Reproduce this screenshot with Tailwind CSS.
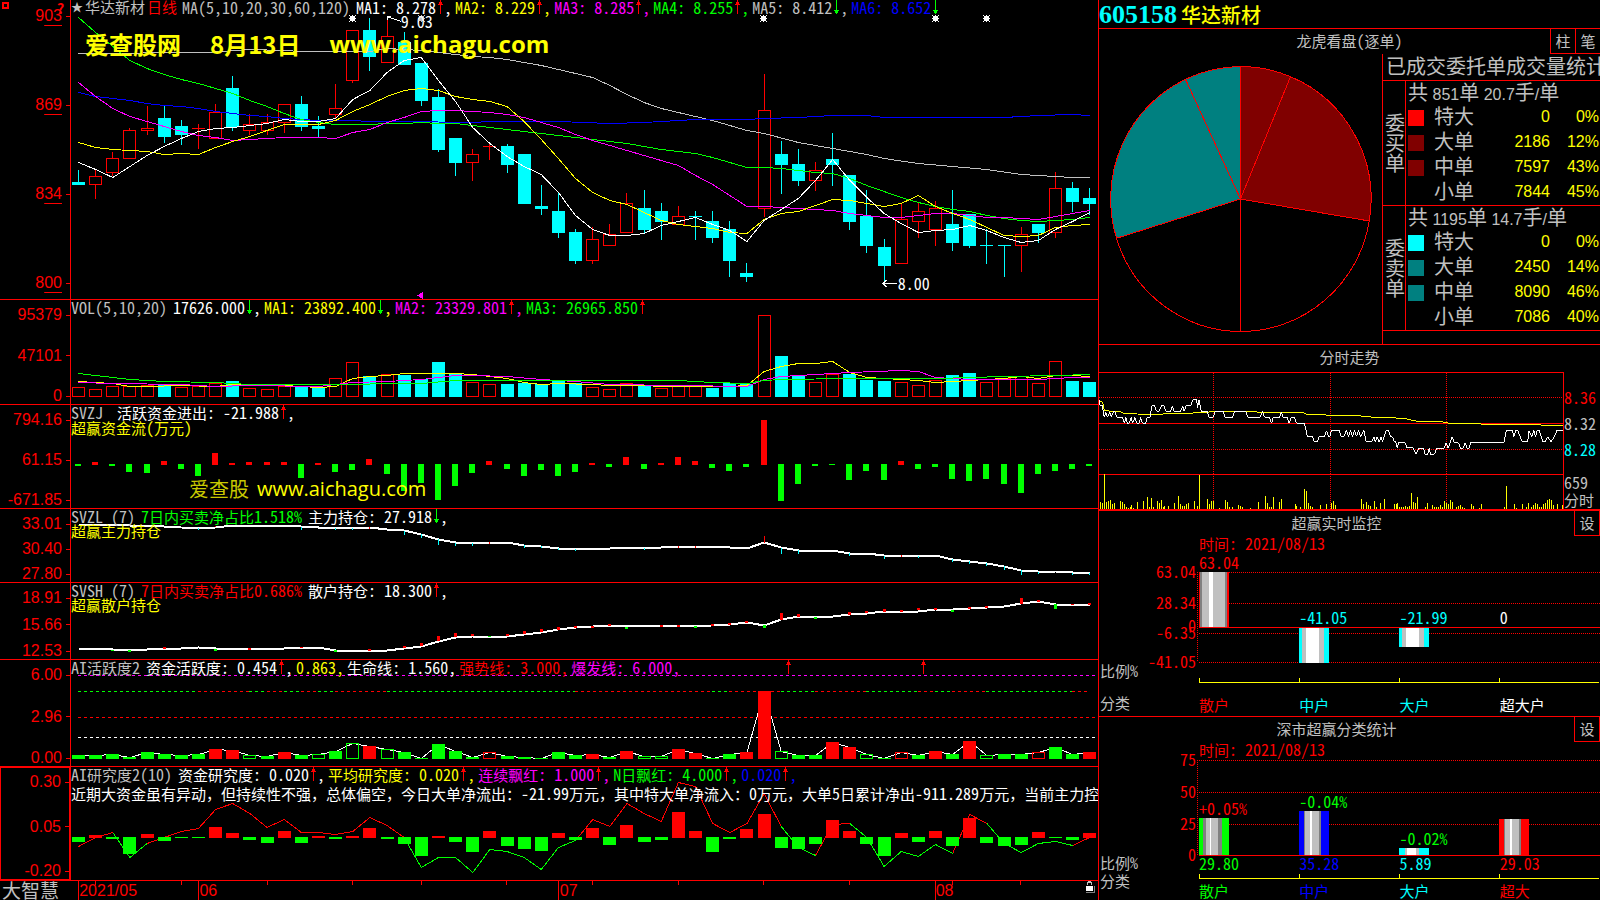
<!DOCTYPE html>
<html lang="zh-CN">
<head>
  <meta charset="UTF-8" />
  <meta name="viewport" content="width=device-width, initial-scale=1" />
  <title>605158 华达新材</title>
  <script src="https://cdn.jsdelivr.net/npm/@tailwindcss/browser@4"></script>
</head>
<body class="h-screen overflow-hidden bg-black text-[#c0c0c0] text-[15px] leading-4 font-['Noto_Sans_CJK_SC',sans-serif] flex">

<main class="flex-1 min-w-0 grid grid-cols-[minmax(0,1fr)] grid-rows-[300fr_105fr_104fr_74fr_77fr_107fr_114fr_19fr]">

  <!-- K line -->
  <section class="relative flex min-h-0 border-b border-[#f00]">
    <div class="w-[71px] shrink-0 border-r border-[#f00] text-[#f00] font-['Liberation_Sans',sans-serif] text-[16px] flex flex-col justify-between py-2">
      <div class="flex items-center justify-end gap-1"><span>9<u class="underline-offset-4">03</u></span><i class="w-1 h-px bg-[#f00]"></i></div>
      <div class="flex items-center justify-end gap-1"><span>8<u class="underline-offset-4">69</u></span><i class="w-1 h-px bg-[#f00]"></i></div>
      <div class="flex items-center justify-end gap-1"><span>8<u class="underline-offset-4">34</u></span><i class="w-1 h-px bg-[#f00]"></i></div>
      <div class="flex items-center justify-end gap-1"><span>8<u class="underline-offset-4">00</u></span><i class="w-1 h-px bg-[#f00]"></i></div>
    </div>
    <i class="absolute left-[2px] top-[2px] size-[7px] border-2 border-[#f00]"></i>
    <b class="absolute left-[57px] top-0 text-[#f00] text-[14px]">?</b>
    <div class="relative flex-1 min-w-0">
      <svg id="kline" class="absolute inset-0 size-full" viewBox="71 0 1027 299" preserveAspectRatio="none" shape-rendering="crispEdges" fill="none"></svg>
      <div data-mix class="relative flex whitespace-pre gap-[3px] leading-[14px]">
        <span class="flex gap-[2px] mr-[2px]"><span class="text-[12px]">★</span><span>华达新材</span><span class="text-[#f00]">日线</span></span>
        <span class="mr-[3px]">MA(5,10,20,30,60,120)</span>
        <span class="text-white">MA1: 8.278↑,</span>
        <span class="text-[#ff0]">MA2: 8.229↑,</span>
        <span class="text-[#f0f]">MA3: 8.285↑,</span>
        <span class="text-[#0f0]">MA4: 8.255↑,</span>
        <span>MA5: 8.412↓,</span>
        <span class="text-[#00f]">MA6: 8.652↓</span>
      </div>
      <div class="absolute left-[14px] top-8 flex gap-[29px] text-[#ff0] text-[24px] leading-6 font-bold whitespace-nowrap">
        <span>爱查股网</span><span>8月13日</span><a href="#" class="font-['Open_Sans',sans-serif]">www.aichagu.com</a>
      </div>
      <span data-mix class="absolute left-[32.1%] top-[13px] text-white">9.03</span>
      <span data-mix class="absolute left-[80.5%] top-[275px] text-white">8.00</span>
    </div>
  </section>

  <!-- volume -->
  <section class="flex min-h-0 border-b border-[#f00]">
    <div data-axis="95379 47101 0" class="w-[71px] shrink-0 border-r border-[#f00] text-[#f00] font-['Liberation_Sans',sans-serif] text-[16px] flex flex-col justify-between pt-[7px]"></div>
    <div class="relative flex-1 min-w-0">
      <svg id="vol" class="absolute inset-0 size-full" viewBox="71 300 1027 104" preserveAspectRatio="none" shape-rendering="crispEdges" fill="none"></svg>
      <div data-mix class="relative flex whitespace-pre gap-[3px] leading-[14px]">
        <span class="mr-[3px]">VOL(5,10,20)</span>
        <span class="text-white">17626.000↓,</span>
        <span class="text-[#ff0]">MA1: 23892.400↓,</span>
        <span class="text-[#f0f]">MA2: 23329.801↑,</span>
        <span class="text-[#0f0]">MA3: 26965.850↑</span>
      </div>
    </div>
  </section>

  <!-- SVZJ -->
  <section class="flex min-h-0 border-b border-[#f00]">
    <div data-axis="794.16 61.15 -671.85" class="w-[71px] shrink-0 border-r border-[#f00] text-[#f00] font-['Liberation_Sans',sans-serif] text-[16px] flex flex-col justify-between pt-[7px]"></div>
    <div class="relative flex-1 min-w-0">
      <svg id="svzj" class="absolute inset-0 size-full" viewBox="71 405 1027 103" preserveAspectRatio="none" shape-rendering="crispEdges" fill="none"></svg>
      <div data-mix class="relative flex whitespace-pre gap-[14px] leading-[14px]">
        <span>SVZJ</span>
        <span class="text-white">活跃资金进出: -21.988↑,</span>
      </div>
      <p data-mix class="relative text-[#ff0] leading-[14px]">超赢资金流(万元)</p>
      <div class="absolute left-[118px] top-[74px] flex gap-2 text-[#ff0] text-[20px] leading-5 whitespace-nowrap">
        <span class="text-[#c8c800]">爱查股</span><a href="#" class="font-['Open_Sans',sans-serif]">www.aichagu.com</a>
      </div>
    </div>
  </section>

  <!-- SVZL -->
  <section class="flex min-h-0 border-b border-[#f00]">
    <div data-axis="33.01 30.40 27.80" class="w-[71px] shrink-0 border-r border-[#f00] text-[#f00] font-['Liberation_Sans',sans-serif] text-[16px] flex flex-col justify-between pt-[7px]"></div>
    <div class="relative flex-1 min-w-0">
      <svg id="svzl" class="absolute inset-0 size-full" viewBox="71 509 1027 73" preserveAspectRatio="none" shape-rendering="crispEdges" fill="none"></svg>
      <div data-mix class="relative flex whitespace-pre gap-[6px] leading-[14px]">
        <span>SVZL (7)</span>
        <span class="text-[#0f0]">7日内买卖净占比1.518%</span>
        <span class="text-white">主力持仓: 27.918↓,</span>
      </div>
      <p class="relative text-[#ff0] leading-[14px]">超赢主力持仓</p>
    </div>
  </section>

  <!-- SVSH -->
  <section class="flex min-h-0 border-b border-[#f00]">
    <div data-axis="18.91 15.66 12.53" class="w-[71px] shrink-0 border-r border-[#f00] text-[#f00] font-['Liberation_Sans',sans-serif] text-[16px] flex flex-col justify-between pt-[7px]"></div>
    <div class="relative flex-1 min-w-0">
      <svg id="svsh" class="absolute inset-0 size-full" viewBox="71 583 1027 76" preserveAspectRatio="none" shape-rendering="crispEdges" fill="none"></svg>
      <div data-mix class="relative flex whitespace-pre gap-[6px] leading-[14px]">
        <span>SVSH (7)</span>
        <span class="text-[#f00]">7日内买卖净占比0.686%</span>
        <span class="text-white">散户持仓: 18.300↑,</span>
      </div>
      <p class="relative text-[#ff0] leading-[14px]">超赢散户持仓</p>
    </div>
  </section>

  <!-- AI activity -->
  <section class="flex min-h-0 border-b border-[#f00]">
    <div data-axis="6.00 2.96 0.00" class="w-[71px] shrink-0 border-r border-[#f00] text-[#f00] font-['Liberation_Sans',sans-serif] text-[16px] flex flex-col justify-between pt-[7px]"></div>
    <div class="relative flex-1 min-w-0">
      <svg id="active" class="absolute inset-0 size-full" viewBox="71 660 1027 106" preserveAspectRatio="none" shape-rendering="crispEdges" fill="none"></svg>
      <div data-mix class="relative flex whitespace-pre gap-[3px] leading-[14px]">
        <span class="mr-[3px]">AI活跃度2</span>
        <span class="text-white">资金活跃度: 0.454↑,</span>
        <span class="text-[#ff0]">0.863,</span>
        <span class="text-white">生命线: 1.560,</span>
        <span class="text-[#f00]">强势线: 3.000,</span>
        <span class="text-[#f0f]">爆发线: 6.000,</span>
      </div>
    </div>
  </section>

  <!-- AI research -->
  <section class="flex min-h-0 border-b border-[#f00]">
    <div data-axis="0.30 0.05 -0.20" class="w-[71px] shrink-0 border border-r-2 border-[#f00] text-[#f00] font-['Liberation_Sans',sans-serif] text-[16px] flex flex-col justify-between pt-[6px]"></div>
    <div class="relative flex-1 min-w-0 overflow-hidden">
      <svg id="research" class="absolute inset-0 size-full" viewBox="71 767 1027 113" preserveAspectRatio="none" shape-rendering="crispEdges" fill="none"></svg>
      <div data-mix class="relative flex whitespace-pre gap-[3px] leading-[14px]">
        <span class="mr-[3px]">AI研究度2(10)</span>
        <span class="text-white">资金研究度: 0.020↑,</span>
        <span class="text-[#ff0]">平均研究度: 0.020↑,</span>
        <span class="text-[#f0f]">连续飘红: 1.000↑,</span>
        <span class="text-[#0f0]">N日飘红: 4.000↑,</span>
        <span class="text-[#00f]">0.020↑,</span>
      </div>
      <p data-mix class="relative mt-1 text-white leading-[14px] whitespace-nowrap">近期大资金虽有异动，但持续性不强，总体偏空，今日大单净流出：-21.99万元，其中特大单净流入：0万元，大单5日累计净出-911.289万元，当前主力控</p>
    </div>
  </section>

  <!-- dates -->
  <footer class="flex min-h-0">
    <div class="w-[71px] shrink-0 pl-[2px] text-[19px] leading-[17px]">大智慧</div>
    <div class="relative flex-1 min-w-0 text-[#f00] font-['Liberation_Sans',sans-serif] text-[16px] leading-[19px]">
      <svg id="dates" class="absolute inset-0 size-full" viewBox="71 881 1027 19" preserveAspectRatio="none" shape-rendering="crispEdges" fill="none"></svg>
      <span class="absolute left-[0.8%] top-0">2021/05</span>
      <span class="absolute left-[12.5%] top-0">06</span>
      <span class="absolute left-[47.6%] top-0">07</span>
      <span class="absolute left-[84.2%] top-0">08</span>
      <button class="absolute right-[3px] top-0" aria-label="锁定">
        <svg class="w-[10px] h-3" viewBox="0 0 10 12" shape-rendering="crispEdges"><path d="M2.500 4V1.500H6.500V4M3 .5h3" fill="none" stroke="#c0c0c0"/><path d="M1 11.500H9.500V5" fill="none" stroke="#808080"/><path d="M1 5h7v5H1z" fill="#fff"/></svg>
      </button>
    </div>
  </footer>
</main>

<aside class="w-[502px] shrink-0 border-l border-[#f00] grid grid-cols-[minmax(0,1fr)] grid-rows-[29fr_316fr_166fr_206fr_183fr]">
  <header class="flex items-center gap-1 pt-[2px] border-b border-[#f00]">
    <span class="text-[#0ff] font-bold text-[26px] font-['Liberation_Serif',serif]">605158</span>
    <h1 class="text-[#ff0] font-medium text-[20px]">华达新材</h1>
  </header>

  <!-- order statistics -->
  <section class="relative flex min-h-0 border-b border-[#f00]">
    <h2 class="absolute inset-x-0 top-[3px] text-center" data-mix>龙虎看盘(逐单)</h2>
    <div class="absolute right-0 top-0 flex">
      <button class="w-[25px] h-[25px] border-l border-b border-[#f00]">柱</button>
      <button class="w-[25px] h-[25px] border-l border-b border-[#f00]">笔</button>
    </div>
    <div class="flex-1 min-w-0">
      <svg class="size-full" viewBox="1099 29 283 315" shape-rendering="crispEdges" stroke="#f00">
        <path d="M1240.500 199V66.500A130.500 132.500 0 0 1 1290.500 76.700Z" fill="#800000"/>
        <path d="M1240.500 199L1290.500 76.700A130.500 132.500 0 0 1 1369.300 221Z" fill="#800000"/>
        <path d="M1240.500 199L1369.300 221A130.500 132.500 0 0 1 1240.500 331.500Z" fill="none"/>
        <path d="M1240.500 199V331.500A130.500 132.500 0 0 1 1116.500 238.300Z" fill="none"/>
        <path d="M1240.500 199L1116.500 238.300A130.500 132.500 0 0 1 1185.500 79.300Z" fill="#008080"/>
        <path d="M1240.500 199L1185.500 79.300A130.500 132.500 0 0 1 1240.500 66.500Z" fill="#008080"/>
      </svg>
    </div>
    <div class="w-[218px] shrink-0 mt-[25px] border-l border-[#f00] overflow-hidden">
      <h3 class="h-[26px] pl-[3px] text-[20px] leading-6 whitespace-nowrap">已成交委托单成交量统计</h3>
      <table class="w-full border-separate border-spacing-0 text-[20px] leading-5">
        <tbody id="buy"></tbody>
        <tbody id="sell"></tbody>
      </table>
      <div class="border-t border-[#f00]"></div>
    </div>
  </section>

  <!-- intraday -->
  <section class="flex flex-col min-h-0 border-b-2 border-[#f00]">
    <h2 class="h-[27px] pt-1 text-center">分时走势</h2>
    <div class="flex flex-1 min-h-0">
      <div class="relative flex-1 min-w-0 border-t border-r border-[#f00]">
        <svg id="intraday" class="absolute inset-0 size-full" viewBox="27 98 1393 410" preserveAspectRatio="none" shape-rendering="crispEdges" fill="none"></svg>
      </div>
      <div class="w-9 pt-[17px] flex flex-col gap-[9px]">
        <span data-mix class="text-[#f00]">8.36</span>
        <span data-mix>8.32</span>
        <span data-mix class="text-[#0ff]">8.28</span>
        <div class="mt-[7px] leading-[17px]"><p data-mix>659</p><p>分时</p></div>
      </div>
    </div>
  </section>

  <!-- realtime monitor -->
  <section class="flex flex-col min-h-0 border-b border-[#f00]">
    <div class="flex">
      <h2 class="flex-1 pt-1 text-center">超赢实时监控</h2>
      <button class="w-[26px] h-[25px] border-l border-b border-r border-[#f00]">设</button>
    </div>
    <p data-mix class="h-4 pl-[100px] text-[#f00] leading-[14px] whitespace-pre">时间: 2021/08/13</p>
    <div class="flex flex-1 min-h-0">
      <div id="monitorAxis" class="relative w-[98px] text-[#f00]"></div>
      <div class="relative flex-1 min-w-0">
        <svg id="monitor" class="absolute inset-0 size-full" viewBox="1197 552 403 134" preserveAspectRatio="none" shape-rendering="crispEdges" fill="none"></svg>
        <div id="monitorValues" class="absolute inset-0 pl-[2px] grid grid-cols-4"></div>
      </div>
    </div>
    <div class="flex h-[30px] items-center">
      <div class="w-[100px] pl-px">
        <p data-mix class="-mt-[30px]">比例%</p>
        <p class="mt-4">分类</p>
      </div>
      <div class="flex-1 grid grid-cols-4 pt-2">
        <span class="text-[#f00]">散户</span><span class="text-[#0ff]">中户</span><span class="text-[#0ff]">大户</span><span class="text-white">超大户</span>
      </div>
    </div>
  </section>

  <!-- class statistics -->
  <section class="flex flex-col min-h-0">
    <div class="flex">
      <h2 class="flex-1 pt-1 text-center">深市超赢分类统计</h2>
      <button class="w-[26px] h-[25px] border-l border-b border-r border-[#f00]">设</button>
    </div>
    <p data-mix class="h-4 pl-[100px] text-[#f00] leading-[14px] whitespace-pre">时间: 2021/08/13</p>
    <div class="flex flex-1 min-h-0">
      <div id="statsAxis" class="relative w-[98px] text-[#f00]"></div>
      <div class="relative flex-1 min-w-0">
        <svg id="stats" class="absolute inset-0 size-full" viewBox="1197 758 403 124" preserveAspectRatio="none" shape-rendering="crispEdges" fill="none"></svg>
        <div id="statsValues" class="absolute inset-0 pl-[2px] grid grid-cols-4"></div>
      </div>
    </div>
    <div class="flex h-[18px] items-center">
      <div class="w-[100px] pl-px">
        <p data-mix class="-mt-[38px] leading-[18px]">比例%</p>
        <p class="leading-[18px]">分类</p>
      </div>
      <div class="flex-1 grid grid-cols-4">
        <span class="text-[#0f0]">散户</span><span class="text-[#00f]">中户</span><span class="text-[#0ff]">大户</span><span class="text-[#f00]">超大</span>
      </div>
    </div>
  </section>
</aside>

<script>
  const RED = '#f00', GREEN = '#0f0', CYAN = '#0ff', YELLOW = '#ff0', MAGENTA = '#f0f', BLUE = '#00f', GRAY = '#c0c0c0', WHITE = '#fff';
  const $ = id => document.getElementById(id);
  const px = i => 78.5 + 17.14 * i;
  const col = i => Math.round(78 + 17.14 * i);

  // ---- text helpers ----
  const arrow = up => `<svg class="inline-block w-2 h-[14px] align-top" viewBox="0 0 8 14" shape-rendering="crispEdges"><path d="${up ? 'M4.500 0V14M3 3.500H6M2 4.500H7M3 2.500H6' : 'M4.500 0V14M3 11.500H6M2 10.500H7M3 12.500H6'}" fill="none" stroke="${up ? RED : GREEN}"/></svg>`;

  // half width latin next to full width hanzi
  function mix(text) {
    return text
      .replace(/[\x20-\x7e]+/g, s => `<span class="text-[16px] [font-feature-settings:'hwid']">${s}</span>`)
      .replace(/↑/g, arrow(true))
      .replace(/↓/g, arrow(false));
  }

  function mix_node(el) {
    [...el.childNodes].forEach(n => {
      if (n.nodeType === 1) return mix_node(n);
      if (n.nodeType !== 3 || !n.data.trim()) return;
      const t = document.createElement('template');
      t.innerHTML = mix(n.data);
      n.replaceWith(t.content);
    });
  }

  document.querySelectorAll('[data-axis]').forEach(el => {
    el.innerHTML = el.dataset.axis.split(' ').map(v =>
      `<div class="flex items-center justify-end gap-1"><span>${v}</span><i class="w-1 h-px bg-[#f00]"></i></div>`).join('');
  });

  // ---- svg helpers ----
  const line = (x1, y1, x2, y2, c, extra = '') => `<path d="M${x1} ${y1}L${x2} ${y2}" stroke="${c}" ${extra}/>`;
  const fill = (x, y, w, h, c) => `<rect x="${x}" y="${y}" width="${w}" height="${h}" fill="${c}"/>`;
  const box = (x, y, w, h, c) => `<rect x="${x + .5}" y="${y + .5}" width="${w - 1}" height="${h - 1}" stroke="${c}"/>`;

  // a curve is either one y per day, or sparse [day, y] pairs
  function curve(ys, c, w = 1) {
    const pts = ys.map((v, i) => Array.isArray(v) ? `${px(v[0])},${v[1] + .5}` : `${px(i)},${v + .5}`);
    return `<polyline points="${pts.join(' ')}" stroke="${c}" stroke-width="${w}"/>`;
  }

  // ---- K line: [up, high, top, bottom, low] ----
  const candles = [
    [0,170,182,185,185],[1,170,176,185,199],[1,152,158,173,176],[1,128,130,159,159],[1,106,128,131,135],[0,106,118,137,143],
    [0,120,126,135,145],[1,124,128,129,149],[1,104,112,139,139],[0,76,88,127,131],[1,114,124,131,135],[1,114,122,131,135],
    [1,104,104,123,133],[0,96,104,127,131],[0,116,126,129,137],[1,84,108,115,118],[1,30,30,81,83],[0,18,30,57,71],
    [1,17,36,63,63],[0,32,42,65,65],[0,63,63,101,106],[0,89,97,150,152],[0,138,138,163,176],[1,149,154,163,181],
    [1,143,146,147,160],[0,144,146,165,173],[0,154,154,204,204],[0,185,206,209,215],[0,193,211,233,238],[0,229,232,261,264],
    [1,227,239,261,264],[1,224,234,246,246],[1,193,203,233,233],[0,190,208,230,234],[0,203,211,222,240],[1,206,216,225,225],
    [0,211,216,217,240],[0,211,221,238,243],[0,221,229,261,277],[0,263,273,277,282],[1,74,110,209,217],[0,141,154,165,194],
    [0,149,164,181,186],[1,162,170,181,191],[0,133,159,165,186],[0,175,175,222,230],[0,190,216,246,253],[0,239,247,266,284],
    [1,203,219,264,264],[1,203,211,222,238],[1,201,208,230,246],[0,190,224,243,251],[0,214,214,246,248],[0,229,245,246,264],
    [0,245,245,246,277],[1,227,234,246,272],[0,224,224,233,243],[1,172,188,233,238],[0,182,188,202,212],[0,188,198,204,215]
  ];

  const sun = (x, c) => fill(x - 2, 16, 5, 5, c) + line(x - 3, 18.5, x + 4, 18.5, c) + line(x + .5, 15, x + .5, 22, c)
    + [[-3, 15], [3, 15], [-3, 21], [3, 21]].map(([dx, y]) => fill(x + dx, y, 1, 1, c)).join('');

  $('kline').innerHTML = candles.map(([up, hi, top, bot, lo], i) => {
    const x = col(i);
    if (!up || bot - top < 2) {
      const c = up ? RED : CYAN;
      return fill(x, hi, 1, lo - hi, c) + fill(x - 6, top, 13, bot - top, c);
    }
    return fill(x, hi, 1, top - hi, RED) + fill(x, bot, 1, lo - bot, RED) + box(x - 6, top, 13, bot - top, RED);
  }).join('')
    + curve([[0,53],[7.5,52],[10,49],[12,50],[13,51],[17,51],[18,48],[19,49],[20,50],[21,52],[22,54],[23,56],[24,57],[25,59],[26,62],[27,65],[28,69],[30,77],[31,85],[32,94],[33,102],[34,108],[36,116],[37,120],[39,130],[40,133],[42,142],[44,148],[46,154],[47,158],[49,163],[51,166],[53,169],[55,174],[57,176],[58,177],[59,177]], GRAY)
    + curve([[0,92],[1,96],[2,98],[3,100],[4,103],[5,105],[6,106],[7,108],[8,111],[9,113],[10,115],[11,116],[12,118],[13,119],[14,120],[16,120],[17,121],[20,121],[22,122],[25,121],[28,121],[31,123],[33,122],[35,120],[36,119],[39,119],[40,118],[42,117],[44,115],[46,115],[47,117],[54,117],[56,115],[58,114],[59,115]], BLUE)
    + curve([17,32,46,60,68,74,79,83,88,93,100,106,113,119,122,124,124,124,123,123,122,123,123,125,127,129,131,133,135,137,139,141,143,146,149,151,153,157,162,167,167,168,170,172,173,178,185,191,197,202,206,209,211,215,218,220,221,220,219,217], GREEN)
    + curve([82,96,108,116,121,126,131,135,137,140,139,138,137,137,137,138,132,129,122,117,111,110,110,111,112,114,117,122,127,134,140,145,150,155,160,165,175,184,195,206,206,207,208,209,210,213,215,217,217,215,213,213,215,217,217,218,219,216,213,210], MAGENTA)
    + curve([142,147,149,150,151,154,153,154,147,141,136,130,124,124,124,120,111,104,96,90,88,90,96,99,101,106,121,139,158,178,192,200,204,212,220,224,226,228,232,233,219,213,211,205,199,200,203,206,203,195,206,213,219,227,235,236,235,227,225,224], YELLOW)
    + curve([162,169,177,166,155,146,138,131,128,127,125,123,119,121,121,118,99,90,72,60,57,80,101,127,143,156,166,174,192,215,229,235,235,233,225,221,217,224,230,241,220,209,198,180,159,180,197,213,223,232,230,229,225,230,237,242,240,229,221,212], WHITE)
    + sun(352, WHITE) + sun(421, GRAY) + sun(763, WHITE) + sun(935, WHITE) + sun(986, WHITE)
    + '<path d="M387 16.500L401 21.500M387 16.500h4M387.500 16v4M883 283.500H897M886.500 280L883 283.500L886.500 287" stroke="#fff"/>'
    + '<path d="M417 295.500L423 292V299Z" fill="#f0f"/>';

  // ---- volume: top of the bar, negative = falling day ----
  const volume = [387,389,386,386,385,-385,387,386,383,-381,388,389,386,-386,-387,378,362,-376,374,-375,-379,-362,-373,382,384,-384,-383,-384,-381,-383,387,389,383,-385,388,386,386,-388,-383,-384,315,-356,-376,382,374,-374,-380,-381,382,385,380,-375,-373,382,378,376,383,361,-381,-382];
  // the two days before the July open closed lower
  $('vol').innerHTML = volume.map((v, i) => v < 0 ? fill(col(i) - 6, -v, 13, 397 + v, CYAN) : box(col(i) - 6, v, 13, 397 - v, RED)).join('')
    + curve([[0,381],[1,382],[2,383],[3,386],[4,386],[6,385],[8,386],[9,384],[12,385],[14,387],[15,386],[16,378],[17,376],[18,375],[19,373],[22,373],[23,374],[24,376],[25,378],[26,382],[27,384],[28,383],[30,384],[31,385],[33,385],[34,386],[38,386],[39,385],[40,371],[41,366],[42,363],[43,363],[44,361],[45,372],[46,377],[47,378],[49,380],[50,382],[52,380],[54,378],[55,376],[56,378],[57,375],[58,375],[59,376]], YELLOW)
    + curve([[0,382],[2,383],[6,384],[8,386],[10,385],[14,386],[16,382],[18,381],[20,379],[22,375],[23,375],[25,376],[27,379],[29,381],[31,384],[35,385],[39,386],[40,379],[41,376],[43,374],[45,372],[48,370],[49,371],[50,377],[52,379],[56,379],[58,377],[59,377]], MAGENTA)
    + curve([[0,373],[3,379],[5,381],[8,382],[10,384],[14,384],[16,384],[18,383],[20,383],[22,380],[35,380],[37,382],[39,383],[40,380],[41,379],[45,378],[50,378],[54,376],[57,375],[59,374]], GREEN);

  // ---- money flow, signed pixels from the zero line ----
  const flow = [-2,3,-2,-8,-9,4,-5,-12,12,2,3,3,3,-14,2,-8,-6,6,-10,-27,-19,-36,-22,-9,4,-5,-12,-6,-12,-8,2,-3,8,-5,2,8,4,-4,-7,-3,45,-37,-20,-2,-1,-16,-7,-16,4,-5,-3,-15,-17,-15,-20,-29,-10,-7,-5,-2];
  $('svzj').innerHTML = flow.map((v, i) => v > 0 ? fill(col(i) - 3, 465 - v, 6, v, RED) : fill(col(i) - 3, 464, 6, -v, GREEN)).join('');

  // ---- holdings ----
  const ticks = (list, w, down) => list.map(([i, y, h]) => h > 0 ? fill(col(i) - (w >> 1), y - h, w, h, RED) : fill(col(i) - (w >> 1), y, w, -h, down)).join('');
  $('svzl').innerHTML = curve([[0,524],[2,524],[3,525],[5,526],[6,527],[7,528],[8,527],[9,525],[12,525],[13,526],[14,527],[17,527],[18,529],[19,530],[20,534],[21,539],[22,542],[25,542],[26,545],[27,546],[28,548],[31,548],[32,547],[34,547],[35,546],[37,546],[38,547],[39,548],[40,542],[41,547],[42,550],[44,550],[45,553],[46,553],[47,555],[50,555],[51,559],[52,561],[53,563],[54,566],[55,570],[56,571],[57,571],[58,572],[59,572]], WHITE, 2)
    + ticks([[7,528,-2],[8,527,1],[13,527,-3],[15,528,-2],[16,528,-2],[17,529,2],[19,531,-4],[20,534,-4],[21,539,-6],[22,543,-3],[23,543,-3],[24,544,2],[26,545,-3],[27,546,-2],[28,548,-2],[29,549,-2],[33,548,-2],[35,548,2],[36,548,2],[40,543,7],[41,548,-6],[42,550,-4],[45,553,-3],[47,556,-3],[48,557,2],[49,556,-2],[51,559,-3],[52,561,-3],[53,563,-3],[54,566,-4],[55,570,-5],[56,572,-2],[58,573,-2],[59,573,-2]], 1, CYAN);
  $('svsh').innerHTML = curve([[0,648],[1,648],[2,649],[3,650],[4,649],[6,648],[7,647],[8,648],[12,648],[13,647],[14,647],[15,650],[16,651],[18,650],[19,648],[20,646],[21,641],[22,637],[23,636],[25,636],[26,634],[27,632],[28,629],[29,627],[30,626],[31,625],[32,626],[37,625],[38,624],[39,622],[40,625],[41,619],[42,616],[44,616],[45,614],[46,613],[47,611],[49,611],[50,609],[51,609],[52,608],[53,607],[54,606],[55,603],[56,601],[57,604],[59,604]], WHITE, 2)
    + ticks([[2,650,-1],[3,650,-2],[5,649,2],[8,649,-2],[10,650,2],[13,648,1],[15,650,-2],[17,651,2],[19,648,2],[20,646,3],[21,641,5],[22,637,4],[23,636,2],[24,636,-1],[25,636,2],[26,634,3],[27,632,3],[28,630,3],[29,628,2],[30,628,2],[31,626,2],[32,627,-2],[34,627,2],[35,627,2],[36,626,-2],[37,626,2],[38,625,2],[39,623,2],[40,625,-3],[41,620,7],[42,617,3],[43,617,-2],[45,615,3],[46,613,2],[47,612,3],[48,612,2],[49,610,2],[50,610,2],[51,610,-2],[52,609,2],[53,608,2],[55,604,6],[56,602,2],[57,604,-5],[58,605,1],[59,605,2]], 3, GREEN);

  // ---- AI activity: colour code + top (g/r filled, G/R hollow) ----
  const activity = 'g755 g755 g754 g757 g752 g754 g755 g754 r749 r750 G755 g756 r752 g755 G754 g751 G743 r746 G749 g752 g758 g744 g751 g757 R752 g756 g757 g758 g752 g755 r754 g757 r751 G756 G756 r749 r753 g758 g754 r752 r691 G751 g755 g755 r742 r747 G754 g758 R752 g755 r751 g754 r741 G755 g754 g754 R752 g747 g754 r752'.split(' ');
  const strength = [[0,7,GREEN],[7,10,RED],[10,11,GREEN],[11,12,RED],[12,13,GREEN],[13,14,RED],[14,15,GREEN],[15,18,RED],[18,29,GREEN],[29,37,RED],[37,38,GREEN],[38,41,RED],[41,43,GREEN],[43,46,RED],[46,49,GREEN],[49,50,RED],[50,51,GREEN],[51,53,RED],[53,58,GREEN],[58,59,RED]];
  const redArrow = x => `<path d="M${x} 660V674M${x - 1.5} 662.500h3M${x - 2.5} 664.500h5M${x - 1.5} 663.500h3" stroke="#f00"/>`;
  $('active').innerHTML = line(78, 675.5, 1096, 675.5, MAGENTA, 'stroke-dasharray="3 3"')
    + strength.map(([a, b, c]) => line(col(a), 691.5, col(b), 691.5, c, 'stroke-dasharray="3 3"')).join('')
    + line(78, 717.5, 1096, 717.5, RED, 'stroke-dasharray="3 3"')
    + line(78, 737.5, 1096, 737.5, WHITE, 'stroke-dasharray="3 3"')
    + curve(activity.map(s => +s.slice(1)), WHITE)
    + activity.map((s, i) => {
      const y = +s.slice(1), c = s[0].toLowerCase() === 'g' ? GREEN : RED;
      return /[gr]/.test(s[0]) ? fill(col(i) - 6, y, 13, 759 - y, c) : box(col(i) - 6, y, 13, 759 - y, c);
    }).join('')
    + redArrow(788.5) + redArrow(923.5);

  // ---- AI research ----
  const bars = [-5,3,-2,-17,4,-4,-1,-1,11,5,-3,-6,7,-6,2,-2,2,10,-2,-7,-19,2,-5,-15,7,-9,-12,-14,5,-3,10,-8,13,-5,-3,26,7,-15,-2,9,24,-11,-12,-7,18,7,-7,-19,5,-5,7,-9,20,-6,-9,-8,6,-1,-3,5];
  const trend = [846,837,832,857,843,837,831,828,809,803,813,827,819,832,832,834,831,817,825,837,867,857,857,872,849,851,857,869,847,840,819,826,803,813,821,782,786,823,832,823,793,826,847,855,824,823,837,866,851,856,844,853,814,823,843,852,843,841,845,837];
  const trendRuns = [[0,2,RED],[2,4,GREEN],[4,19,RED],[19,29,GREEN],[29,41,RED],[41,43,GREEN],[43,45,RED],[45,51,GREEN],[51,53,RED],[53,58,GREEN],[58,59,RED]];
  $('research').innerHTML = trendRuns.map(([a, b, c]) => curve(trend.slice(a, b + 1).map((y, k) => [a + k, y]), c)).join('')
    + bars.map((v, i) => v > 0 ? fill(col(i) - 6, 838 - v, 13, v, RED) : fill(col(i) - 6, 837, 13, -v, GREEN)).join('');

  $('dates').innerHTML = [78, 198, 558, 935].map(x => fill(x, 881, 1, 19, RED)).join('')
    + [95, 181, 267, 352, 421, 506, 592, 678, 763, 849, 952, 1020].map(x => fill(x, 881, 1, 4, RED)).join('');

  // ---- order table ----
  function orders(id, side, total, avg, rows) {
    $(id).innerHTML = `
      <tr class="h-[25px]">
        <th rowspan="5" class="w-[23px] p-0 pl-[2px] border-t border-r border-[#f00] font-normal">${[...side].join('<br>')}</th>
        <td colspan="4" class="p-0 pl-[2px] border-t border-[#f00] whitespace-nowrap">共 <span class="font-['Liberation_Sans',sans-serif] text-[16px]">${total}</span>单 <span class="font-['Liberation_Sans',sans-serif] text-[16px]">${avg}</span>手<span class="font-['Liberation_Sans',sans-serif] text-[16px]">/</span>单</td>
      </tr>` + rows.map(([name, color, n, pct]) => `
      <tr class="h-[25px]">
        <td class="w-[28px] p-0 pl-[2px]"><i class="block size-4" style="background:${color}"></i></td>
        <td class="p-0 pb-[3px] whitespace-nowrap">${name}</td>
        <td class="p-0 pb-[2px] text-right text-[#ff0] font-['Liberation_Sans',sans-serif] text-[16px]">${n}</td>
        <td class="w-[50px] p-0 pr-px pb-[2px] text-right text-[#ff0] font-['Liberation_Sans',sans-serif] text-[16px]">${pct}%</td>
      </tr>`).join('');
  }
  orders('buy', '委买单', 851, '20.7', [['特大', '#f00', 0, 0], ['大单', '#800000', 2186, 12], ['中单', '#800000', 7597, 43], ['小单', '#000', 7844, 45]]);
  orders('sell', '委卖单', 1195, '14.7', [['特大', '#0ff', 0, 0], ['大单', '#008080', 2450, 14], ['中单', '#008080', 8090, 46], ['小单', '#000', 7086, 40]]);

  // ---- intraday ----
  const price = '27,180 30,195 36,195 43,232 47,215 53,232 59,215 64,232 70,215 76,215 80,232 98,232 103,250 108,232 112,250 118,250 124,232 128,250 135,232 141,250 148,250 152,232 158,250 167,250 172,232 180,232 186,197 194,197 200,214 208,214 214,197 222,197 228,214 242,214 247,197 252,214 272,214 278,197 283,214 288,197 302,197 308,179 320,179 323,203 327,179 334,214 352,214 358,232 370,232 376,214 400,214 406,232 428,232 434,214 468,214 474,232 510,232 518,214 524,232 538,232 545,250 550,232 569,232 574,216 580,232 592,232 598,250 604,232 614,232 620,250 644,250 652,288 668,290 674,306 682,306 688,290 704,290 710,272 716,290 720,290 725,271 748,271 754,290 762,288 770,271 776,290 782,271 788,290 794,271 800,288 806,271 812,290 822,271 829,306 846,306 852,290 857,306 862,290 868,306 874,290 878,306 886,280 890,271 896,271 902,288 908,290 914,306 918,306 922,324 928,306 946,308 952,324 970,324 978,343 986,327 1002,327 1006,343 1014,343 1018,325 1022,343 1034,343 1040,325 1064,325 1069,308 1075,325 1082,306 1087,290 1093,306 1106,308 1112,325 1120,325 1126,308 1132,325 1138,325 1144,307 1243,307 1250,271 1268,271 1272,290 1278,271 1284,271 1298,306 1314,306 1318,272 1326,290 1332,271 1338,290 1342,272 1348,271 1360,306 1366,306 1374,290 1384,306 1394,290 1402,271 1420,271';
  const average = '27,181 38,187 43,212 88,214 100,219 140,220 143,223 220,223 222,220 305,220 320,216 500,214 505,217 640,217 650,223 705,223 710,226 810,226 815,229 850,231 910,233 948,236 984,244 1050,244 1075,249 1170,250 1175,253 1350,253 1355,256 1420,256';
  const minutes = '31:486 37:489 43:403 49:486 55:483 61:480 67:492 73:489 91:483 97:486 103:492 109:501 115:504 121:501 124:495 130:504 142:486 160:483 172:471 178:501 184:474 190:501 202:483 208:489 214:480 220:501 223:498 235:498 253:489 265:468 271:492 277:498 283:498 289:492 295:489 313:483 322:498 328:405 352:477 358:492 364:483 370:483 388:504 406:480 412:486 418:501 427:501 445:495 451:498 457:501 481:504 505:486 526:468 532:489 538:501 544:501 550:471 568:486 574:477 616:492 619:498 631:501 643:447 649:453 655:489 661:498 667:501 691:495 709:492 724:489 730:483 736:495 814:477 820:492 829:486 835:495 841:498 853:483 859:501 871:489 883:477 913:492 919:492 922:489 928:501 934:501 940:501 946:498 952:501 958:498 964:459 970:486 976:489 982:471 1006:501 1012:489 1027:495 1033:501 1039:501 1045:501 1051:495 1057:501 1063:483 1069:489 1075:492 1081:480 1087:486 1099:501 1105:498 1111:495 1117:501 1123:504 1144:492 1150:498 1168:504 1174:492 1243:501 1249:438 1273:492 1279:504 1297:492 1309:501 1315:489 1324:501 1330:495 1336:489 1342:492 1348:501 1354:501 1360:492 1366:489 1372:480 1378:477 1384:480 1390:495 1402:492 1418:495';
  const thin = 'stroke-width="3"', dots = 'stroke-width="3" stroke-dasharray="3 3"';
  $('intraday').innerHTML = line(27, 172, 1420, 172, RED, dots) + line(27, 250, 1420, 250, RED, thin) + line(27, 328, 1420, 328, RED, dots)
    + line(27, 403, 1420, 403, RED, thin)
    + [370, 721, 1069].map(x => line(x, 98, x, 508, RED, dots)).join('')
    + minutes.split(' ').map(s => s.split(':')).map(([x, y]) => line(x, y, x, 508, YELLOW, thin)).join('')
    + `<polyline points="${average}" stroke="#ff0" stroke-width="3"/><polyline points="${price}" stroke="#fff" stroke-width="3"/>`;

  // ---- cylinder bars: stripes are [colour, width] ----
  const DIM = '#808080';
  function cylinder(x, y, h, stripes) {
    return stripes.map(([c, w]) => { const r = fill(x, y, w, h, c); x += w; return r; }).join('');
  }
  const scale = (ys, zero, from, to) => ys.map(y => line(1199, y + .5, 1600, y + .5, RED, 'stroke-dasharray="1 1"')).join('')
    + line(1197.5, from, 1197.5, to, RED, 'stroke-dasharray="1 1"') + line(1199, zero + .5, 1600, zero + .5, RED);
  const base = y => line(1199, y + .5, 1599, y + .5, YELLOW) + [1199, 1299, 1399, 1499].map(x => fill(x, y - 4, 1, 4, YELLOW)).join('');

  $('monitor').innerHTML = scale([572, 603, 633, 662], 627, 572, 662)
    + cylinder(1199, 572, 55, [[RED, 1], [DIM, 2], [GRAY, 7], [WHITE, 4], [GRAY, 12], [DIM, 2], [RED, 2]])
    + cylinder(1299, 628, 35, [[CYAN, 3], [GRAY, 4], [WHITE, 13], [GRAY, 5], [CYAN, 5]])
    + cylinder(1399, 628, 19, [[CYAN, 3], [GRAY, 4], [WHITE, 13], [GRAY, 5], [CYAN, 5]])
    + base(682);
  $('stats').innerHTML = scale([760, 792, 824], 855, 760, 855)
    + cylinder(1199, 818, 37, [[GREEN, 4], [DIM, 3], [GRAY, 4], [WHITE, 1], [GRAY, 7], [DIM, 4], [GREEN, 7]])
    + cylinder(1299, 811, 44, [[BLUE, 5], [DIM, 1], [GRAY, 5], [WHITE, 2], [GRAY, 7], [DIM, 2], [BLUE, 8]])
    + cylinder(1399, 848, 7, [[CYAN, 6], [GRAY, 2], [WHITE, 9], [GRAY, 3], [CYAN, 10]])
    + cylinder(1499, 819, 36, [[RED, 5], [DIM, 1], [GRAY, 5], [WHITE, 2], [GRAY, 7], [DIM, 2], [RED, 8]])
    + base(878);

  // labels sit at a share of the plot height
  const axis = (top, h, list) => list.map(([t, y]) =>
    `<span class="absolute right-px -translate-y-[10px]" style="top:${(y - top) / h * 100}%">${mix(t)}</span>`).join('');
  const values = (top, h, cells) => cells.map(cell => `<div class="relative">` + cell.map(([t, y, c]) =>
    `<span class="absolute left-0 -translate-y-[10px]" style="top:${(y - top) / h * 100}%;color:${c}">${mix(t)}</span>`).join('') + `</div>`).join('');

  $('monitorAxis').innerHTML = axis(552, 134, [['63.04', 573], ['28.34', 604], ['0', 627], ['-6.35', 634], ['-41.05', 663]]);
  $('monitorValues').innerHTML = values(552, 134, [[['63.04', 564, RED]], [['-41.05', 619, CYAN]], [['-21.99', 619, CYAN]], [['0', 619, WHITE]]]);
  $('statsAxis').innerHTML = axis(758, 124, [['75', 761], ['50', 793], ['25', 825], ['0', 856]]);
  $('statsValues').innerHTML = values(758, 124, [
    [['+0.05%', 810, RED], ['29.80', 865, GREEN]],
    [['-0.04%', 803, GREEN], ['35.28', 865, BLUE]],
    [['-0.02%', 840, GREEN], ['5.89', 865, CYAN]],
    [['29.03', 865, RED]]
  ]);

  document.querySelectorAll('[data-mix]').forEach(mix_node);
</script>
</body>
</html>
